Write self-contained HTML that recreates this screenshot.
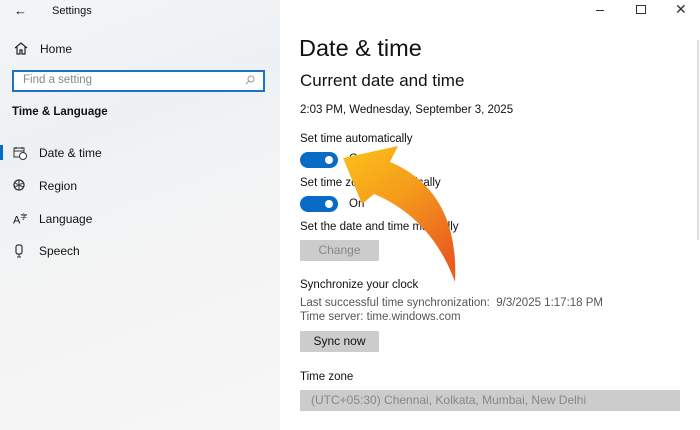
<!DOCTYPE html><html><head><style>
body{margin:0;width:700px;height:430px;overflow:hidden;font-family:"Liberation Sans",sans-serif;position:relative;background:#fff}
.l{position:absolute;left:0;top:0;width:280px;height:430px;background:linear-gradient(160deg,#f3f4f5,#eef1f4 30%,#f4f4f4 60%,#f6f6f6)}
.t{position:absolute;white-space:nowrap;color:#111}
.btn{position:absolute;background:#ccc;font-size:12px;text-align:center}
.tog{position:absolute;width:38px;height:16px;border-radius:9px;background:#0a6bc7}
.tog:after{content:"";position:absolute;right:5px;top:4px;width:8px;height:8px;border-radius:50%;background:#fff}
</style></head><body>
<div class="l"></div>
<div class="t" style="left:14px;top:3px;font-size:13px">←</div>
<div class="t" style="left:52px;top:5px;font-size:11px">Settings</div>
<svg style="position:absolute;left:14px;top:42px" width="14" height="13" viewBox="0 0 14 13"><path d="M1 6L7 1L13 6M3 5V12H6V8H8V12H11V5" fill="none" stroke="#222" stroke-width="1.2"/></svg>
<div class="t" style="left:40px;top:42px;font-size:12px">Home</div>
<div style="position:absolute;left:12px;top:70px;width:249px;height:18px;border:2px solid #1a73c6;background:#fff"></div>
<div class="t" style="left:23px;top:74px;font-size:11.5px;color:#888">Find a setting</div>
<svg style="position:absolute;left:245px;top:75px" width="10" height="10"><circle cx="6" cy="4" r="3" fill="none" stroke="#999"/><path d="M4 6L1 9" stroke="#999"/></svg>
<div class="t" style="left:12px;top:106px;font-size:11.5px;font-weight:bold">Time &amp; Language</div>
<div style="position:absolute;left:0;top:145px;width:3px;height:15px;background:#0a6bc7"></div>
<svg style="position:absolute;left:13px;top:146px" width="14" height="14"><rect x="1" y="2" width="10" height="9" fill="none" stroke="#333"/><path d="M1 5H11M3 1V3M9 1V3" stroke="#333"/><circle cx="10" cy="10" r="3.5" fill="#fff" stroke="#333"/></svg>
<div class="t" style="left:39px;top:146px;font-size:12px">Date &amp; time</div>
<svg style="position:absolute;left:13px;top:179px" width="12" height="12"><circle cx="6" cy="6" r="5" fill="none" stroke="#333" stroke-width="1.3"/><path d="M2 4Q6 7 10 4M2 8Q6 5 10 8M6 1V11" stroke="#333" fill="none"/></svg>
<div class="t" style="left:39px;top:179px;font-size:12px">Region</div>
<div class="t" style="left:13px;top:212px;font-size:11px">A<sup style="font-size:7px">字</sup></div>
<div class="t" style="left:39px;top:212px;font-size:12px">Language</div>
<svg style="position:absolute;left:14px;top:244px" width="10" height="14"><rect x="2" y="1" width="6" height="9" rx="2" fill="none" stroke="#333" stroke-width="1.2"/><path d="M5 10V13M3 13H7" stroke="#333"/></svg>
<div class="t" style="left:39px;top:244px;font-size:12px">Speech</div>
<div style="position:absolute;left:596px;top:10px;width:8px;height:1px;background:#333"></div>
<div style="position:absolute;left:636px;top:5px;width:8px;height:7px;border:1px solid #333"></div>
<div class="t" style="left:675px;top:1px;font-size:14px;color:#333">✕</div>
<div style="position:absolute;left:697px;top:40px;width:2px;height:200px;background:#ddd"></div>
<div class="t" style="left:299px;top:35px;font-size:23.5px">Date &amp; time</div>
<div class="t" style="left:300px;top:71px;font-size:17px">Current date and time</div>
<div class="t" style="left:300px;top:104px;font-size:11.5px">2:03 PM, Wednesday, September 3, 2025</div>
<div class="t" style="left:300px;top:133px;font-size:11.5px">Set time automatically</div>
<div class="tog" style="left:300px;top:152px"></div>
<div class="t" style="left:349px;top:153px;font-size:11.5px">On</div>
<div class="t" style="left:300px;top:177px;font-size:11.5px">Set time zone automatically</div>
<div class="tog" style="left:300px;top:196px"></div>
<div class="t" style="left:349px;top:198px;font-size:11.5px">On</div>
<div class="t" style="left:300px;top:221px;font-size:11.5px">Set the date and time manually</div>
<div class="btn" style="left:300px;top:240px;width:79px;height:21px;line-height:21px;color:#888">Change</div>
<div class="t" style="left:300px;top:279px;font-size:11.5px">Synchronize your clock</div>
<div class="t" style="left:300px;top:297px;font-size:11.5px;color:#555">Last successful time synchronization:&nbsp; 9/3/2025 1:17:18 PM</div>
<div class="t" style="left:300px;top:311px;font-size:11.5px;color:#555">Time server: time.windows.com</div>
<div class="btn" style="left:300px;top:331px;width:79px;height:21px;line-height:21px;color:#111">Sync now</div>
<div class="t" style="left:300px;top:371px;font-size:11.5px">Time zone</div>
<div class="btn" style="left:300px;top:390px;width:380px;height:21px;line-height:21px;text-align:left;color:#888;text-indent:11px">(UTC+05:30) Chennai, Kolkata, Mumbai, New Delhi</div>
<svg style="position:absolute;left:0;top:0" width="700" height="430"><defs><linearGradient id="g" x1="0" y1="0" x2="0.6" y2="1"><stop offset="0" stop-color="#fcc21a"/><stop offset="0.5" stop-color="#f59a1c"/><stop offset="1" stop-color="#ea5f1f"/></linearGradient></defs>
<path d="M343 158L398 146L390 162C438 182 458 225 455 282C440 240 412 210 374 194L362 204Z" fill="url(#g)"/></svg>
</body></html>
